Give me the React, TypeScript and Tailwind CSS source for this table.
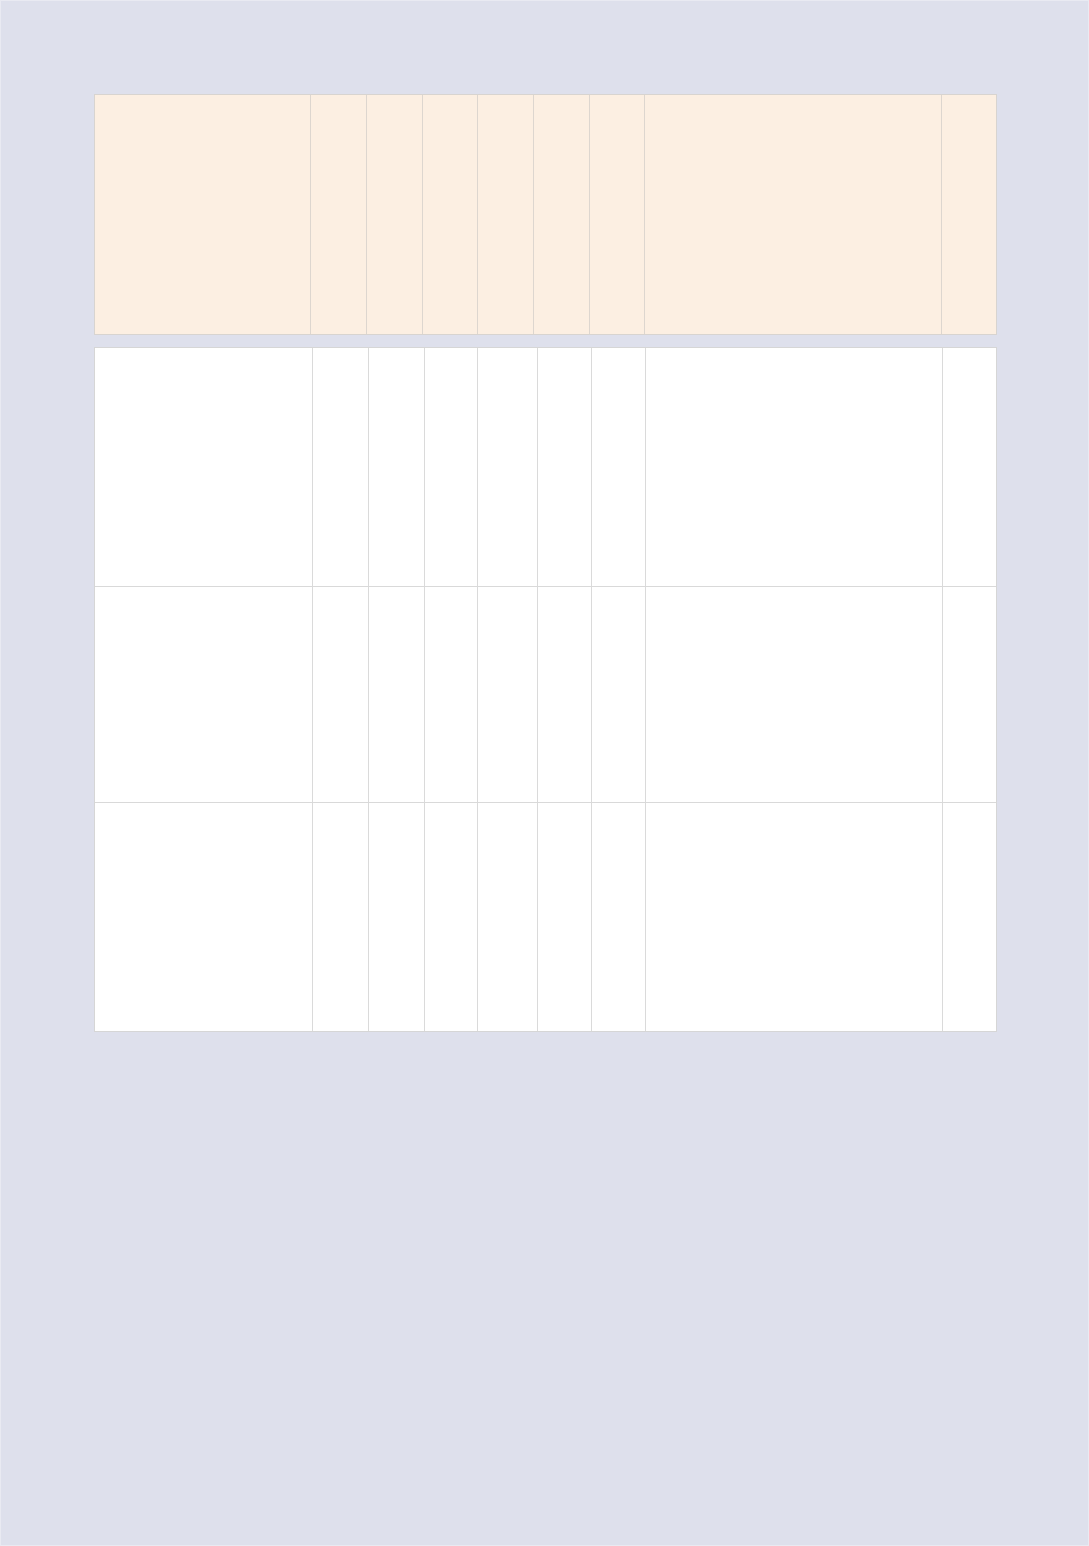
import React from "react";

const headW = ["w-[216px]", "w-[56px]", "w-[56px]", "w-[55px]", "w-[56px]", "w-[56px]", "w-[55px]", "w-[297px]", "w-[54px]"];
const bodyW = ["w-[218px]", "w-[56px]", "w-[56px]", "w-[53px]", "w-[60px]", "w-[54px]", "w-[54px]", "w-[297px]", "w-[53px]"];
const rowH = ["h-[239px] border-b", "h-[216px] border-b", "h-[228px]"];

export default function App() {
  return (
    <div className="w-[1089px] h-[1546px] bg-[#dee0ec] border border-[#e9eaf2] pl-[93px] pt-[93px] font-['Liberation_Sans',sans-serif]">
      <div className="flex w-[903px] h-[241px] bg-[#fcefe2] border border-[#d8d4d0]">
        {headW.map((w, i) => (
          <div key={i} className={`${w} h-full ${i < headW.length - 1 ? "border-r border-[#ddd6cf]" : ""}`} />
        ))}
      </div>
      <div className="mt-[12px] w-[903px] bg-white border border-[#d6d6d6]">
        {rowH.map((h, r) => (
          <div key={r} className={`flex ${h} border-[#d9d9d9]`}>
            {bodyW.map((w, i) => (
              <div key={i} className={`${w} h-full ${i < bodyW.length - 1 ? "border-r border-[#dadada]" : ""}`} />
            ))}
          </div>
        ))}
      </div>
    </div>
  );
}
